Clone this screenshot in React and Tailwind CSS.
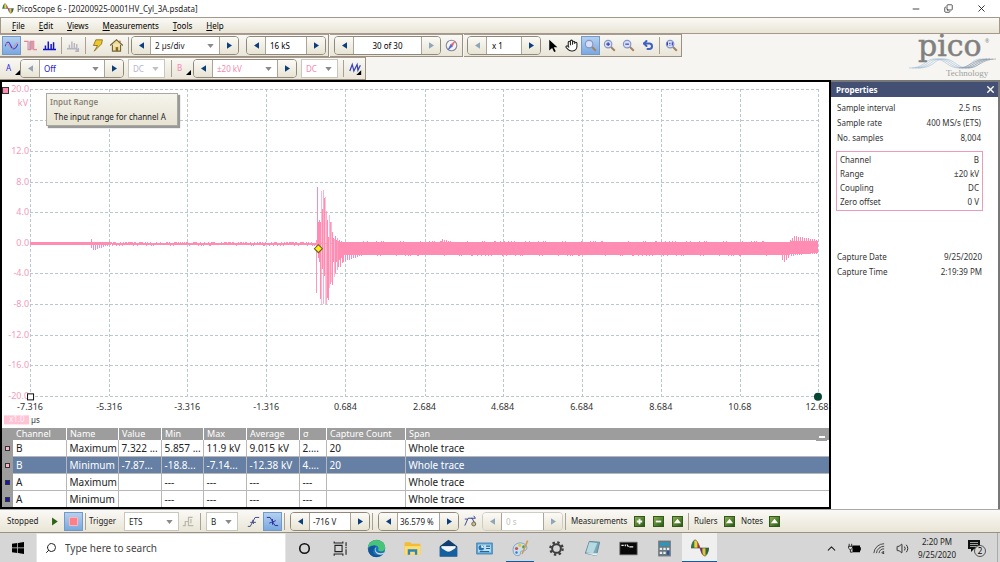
import React from 'react';
import { Minus, Copy, X, Search, Settings, ChevronUp, Volume2, Hand, Undo2 } from 'lucide-react';

const FONT = "font-['Noto_Sans','Open_Sans',sans-serif]";

const Tri = ({ dir = 'right', dim }) => (
  <svg viewBox="0 0 6 8" className={`h-[7px] w-[5px] ${dim ? 'fill-[#8fa6b8]' : 'fill-[#0b3f7c]'}`}>
    <path d={dir === 'left' ? 'M6 0V8L0 4Z' : 'M0 0V8L6 4Z'} />
  </svg>
);

const Sep = () => <span className="mx-[2px] h-[17px] w-px shrink-0 bg-[#a9a294]" />;

const Step = ({ dir, label, dim }) => (
  <button
    type="button"
    aria-label={`${label} ${dir === 'left' ? 'down' : 'up'}`}
    className="flex h-full w-[18px] shrink-0 items-center justify-center bg-linear-to-b from-[#fbfaf6] to-[#e8e4d4]"
  >
    <Tri dir={dir} dim={dim} />
  </button>
);

const Combo = ({ label, value, className, text = 'text-[#222]', dim }) => (
  <span className={`relative h-[17px] shrink-0 bg-white ${className}`}>
    <select aria-label={label} className={`block h-[17px] w-full appearance-none pr-3 pl-1 text-[8px] leading-[17px] ${text}`}>
      <option>{value}</option>
    </select>
    <svg viewBox="0 0 8 5" className={`pointer-events-none absolute top-[7px] right-[5px] h-[4px] w-[7px] ${dim ? 'fill-[#c0c0c0]' : 'fill-[#8a8a8a]'}`}>
      <path d="M0 0H8L4 5Z" />
    </svg>
  </span>
);

const Spin = ({ label, children, dimLeft, dimRight, faded }) => (
  <div className={`flex h-[19px] shrink-0 items-stretch overflow-hidden rounded-[4px] border ${faded ? 'border-[#cfccc2]' : 'border-[#8f897c]'}`}>
    <Step dir="left" label={label} dim={dimLeft} />
    <div className="flex border-x border-[#aaa598]">{children}</div>
    <Step dir="right" label={label} dim={dimRight} />
  </div>
);

const Field = ({ label, value, className }) => (
  <input aria-label={label} defaultValue={value} className={`h-[17px] min-w-0 bg-white text-[8px] leading-[17px] ${className}`} />
);

const Tool = ({ label, on, children }) => (
  <button
    type="button"
    aria-label={label}
    className={`flex h-[19px] w-[19px] shrink-0 items-center justify-center ${on ? 'border border-[#7399c6] bg-linear-to-b from-[#b5d0ef] to-[#79a8e0]' : ''}`}
  >
    <svg viewBox="0 0 16 16" className="h-[13px] w-[13px]" fill="none">
      {children}
    </svg>
  </button>
);

const Group = ({ children }) => (
  <div className="flex h-[23px] items-center border-r border-b border-[#9b9082] bg-linear-to-b from-[#faf9f5] to-[#e9e5d8] pl-[3px] shadow-[inset_0_1px_0_#a89d90]">
    {children}
  </div>
);

const Glass = ({ sign }) => (
  <>
    <path d="M9.5 9.5L14.5 14.5" stroke="#a58161" strokeWidth="2.4" />
    <circle cx="6.3" cy="6.3" r="4.6" fill="#d5e1fa" stroke="#8794c4" strokeWidth="1.4" />
    {sign && <path d={sign} stroke="#3439b6" strokeWidth="1.4" />}
  </>
);

const Channel = ({ name, color }) => (
  <button type="button" className="relative h-[19px] w-[17px] shrink-0 text-left text-[8px]">
    <span className={`pl-[3px] ${color}`}>{name}</span>
    <svg viewBox="0 0 5 5" className="absolute right-0 bottom-[3px] h-[5px] w-[5px]">
      <path d="M5 0V5H0Z" />
    </svg>
  </button>
);

const PicoIcon = ({ className }) => (
  <svg viewBox="0 0 20 20" className={className}>
    <path d="M0 10Q1 3 4 1V10Z" fill="#2f7f37" />
    <path d="M4 1Q6 0 7 3V10H4Z" fill="#ecd52d" />
    <path d="M7 3Q9 6 10 10H7Z" fill="#d2272c" />
    <path d="M10 10Q11 16 13 18V10Z" fill="#7d2f5d" />
    <path d="M13 10H16V18Q14.500 20 13 18Z" fill="#e4cb24" />
    <path d="M16 10H20Q19 17 16 18Z" fill="#2c6839" />
    <path d="M0 10Q4 -8 10 10Q16 28 20 10Z" fill="none" stroke="#4b4b4b" strokeWidth=".7" />
  </svg>
);

const Logo = () => (
  <svg viewBox="0 0 90 44" className="mr-px h-[44px] w-[90px] shrink-0 overflow-visible" role="img" aria-label="pico Technology">
    <g fill="none" strokeWidth=".6">
      {[0, 3, 6, 9].map((o) => (
        <path key={o} d={`M${o} 34C${17 + o} 34 ${15 + o} 25 ${26 + o} 25S${38 + o} 34 ${50 + o} 34S${62 + o} 25 ${72 + o} 25`} stroke="#9dbad6" />
      ))}
      {[0, 3, 6, 9].map((o) => (
        <path key={o} d={`M${50 + o} 34C${60 + o} 34 ${64 + o} 25 ${78 + o} 25`} stroke="#8b94a0" />
      ))}
    </g>
    <text x="9" y="22" fontSize="30" fill="#808080" stroke="#808080" strokeWidth=".5" fontFamily="DejaVu Serif, serif">pico</text>
    <text x="76" y="9" fontSize="5" fill="#858585" fontFamily="Noto Sans, sans-serif">®</text>
    <text x="37" y="42" fontSize="9" fill="#a0a0a0" fontFamily="Liberation Serif, serif">Technology</text>
  </svg>
);

const TitleBar = () => (
  <header className="flex h-[17px] items-center bg-white pl-[2px] text-[8px] text-[#222]">
    <PicoIcon className="mr-[3px] h-[11px] w-[12px]" />
    <h1>PicoScope 6 - [20200925-0001HV_Cyl_3A.psdata]</h1>
    <div className="ml-auto flex gap-[23px] pr-[13px]">
      <button type="button" aria-label="Minimize"><Minus size={10} strokeWidth={2} /></button>
      <button type="button" aria-label="Restore"><Copy size={9} strokeWidth={2} className="-scale-y-100" /></button>
      <button type="button" aria-label="Close"><X size={11} strokeWidth={2} /></button>
    </div>
  </header>
);

const MenuBar = () => (
  <nav className="flex h-[17px] items-center gap-[14px] border border-[#a3988b] bg-linear-to-b from-[#faf9f5] to-[#e9e5d6] pl-[11px] text-[8px]">
    {['File', 'Edit', 'Views', 'Measurements', 'Tools', 'Help'].map((m) => (
      <button type="button" key={m}>
        <span className="underline">{m[0]}</span>{m.slice(1)}
      </button>
    ))}
  </nav>
);

const Toolbars = () => (
  <div className="flex h-[46px] items-start justify-between bg-[#f6f5f1]">
    <div className="flex flex-col items-start">
      <div className="flex gap-px">
        <Group>
          <div className="-ml-px flex items-center">
            <Tool label="Scope mode" on>
              <path d="M0 9C3 1 5 3 7 8S12 15 16 6" stroke="#343ac4" strokeWidth="1.3" />
              <path d="M0 7C4 1 6 13 9 12S12 4 16 5" stroke="#df829b" strokeWidth="1.200" />
            </Tool>
            <Tool label="Persistence mode">
              <path d="M0 3H5V13H8V3H12V13H16" stroke="#ec8197" strokeWidth="1.4" />
              <path d="M8 3H12V13H8Z" fill="#d79aa9" />
              <path d="M7 3V13" stroke="#8f9bd6" />
            </Tool>
            <Tool label="Spectrum mode">
              <path d="M0 13H16M3 13V8M6.500 13V3M10 13V6M13 13V4" stroke="#1111ce" strokeWidth="1.800" />
            </Tool>
          </div>
          <Sep />
          <Tool label="Spectrum options">
            <path d="M0 12H11M3 12V7M6 12V3M9 12V5M12 12V6M10 11L14 15M14 11V15H10" stroke="#b5b4c0" strokeWidth="1.7" />
          </Tool>
          <Sep />
          <Tool label="Auto setup">
            <path d="M6 1H14L13 6L4 15L8 8H3Z" fill="#edc72f" stroke="#866818" />
          </Tool>
          <Tool label="Home">
            <path d="M0 8L8 1L16 8M3 7V15H13V7" fill="#f0df95" stroke="#75653b" strokeWidth="1.4" />
            <path d="M7 10H10V15H7Z" fill="#7f6b35" />
            <path d="M11 2H13V5" fill="#b34d36" />
          </Tool>
          <Sep />
          <Spin label="Timebase"><Combo label="Timebase" value="2 µs/div" className="w-[68px]" /></Spin>
          <span className="mr-px"><Sep /></span>
          <div className="ml-[2px]"><Spin label="Samples"><Field label="Samples" value="16 kS" className="w-[40px] pl-1" /></Spin></div>
          <span className="w-[2px]" />
        </Group>
        <Group>
          <div className="ml-px"><Spin label="Buffer" dimRight><Field label="Buffer" value="30 of 30" className="w-[67px] text-center" /></Spin></div>
          <span className="w-px" />
          <Tool label="Buffer navigator">
            <circle cx="8" cy="8" r="6.500" fill="#f5f5fc" stroke="#8b899a" strokeWidth="1.4" />
            <path d="M12 3L9 9L7 7Z" fill="#ed6166" stroke="#ed6166" />
            <path d="M4 13L9 9L7 7Z" fill="#4668df" stroke="#4668df" />
          </Tool>
          <span className="w-px" />
        </Group>
        <Group>
          <Spin label="Zoom" dimLeft><Field label="Zoom" value="x 1" className="w-[34px] pl-[5px]" /></Spin>
          <div className="ml-[2px] flex items-center">
            <Tool label="Pointer"><path d="M4 1V14L7.500 11L10 16L12 15L9.500 10H14Z" fill="#000" /></Tool>
            <button type="button" aria-label="Hand" className="flex h-[19px] w-[19px] items-center justify-center"><Hand size={13} className="fill-white text-[#222]" /></button>
            <Tool label="Marquee zoom" on><Glass /></Tool>
            <Tool label="Zoom in"><Glass sign="M4 6.300H8.600M6.300 4V8.600" /></Tool>
            <Tool label="Zoom out"><Glass sign="M4 6.300H8.600" /></Tool>
            <button type="button" aria-label="Undo zoom" className="flex h-[19px] w-[19px] items-center justify-center"><Undo2 size={12} strokeWidth={4} className="text-[#4161c2]" /></button>
            <Sep />
            <Tool label="Zoom to full"><Glass sign="M3 4V8M9 4V8M6 4.500V6M6 7V8" /></Tool>
          </div>
        </Group>
      </div>
      <Group>
        <Channel name="A" color="text-[#2a2ae0]" />
        <Spin label="Channel A range" dimLeft><Combo label="Channel A range" value="Off" className="w-[64px]" text="text-[#1717c8]" /></Spin>
        <div className="ml-[4px] h-[19px] border border-[#c9c6bc]"><Combo label="Channel A coupling" value="DC" className="block w-[35px]" text="text-[#b6b6cd]" dim /></div>
        <span className="ml-[4px] flex"><Sep /></span>
        <Channel name="B" color="text-[#f28aae]" />
        <div className="ml-[2px]"><Spin label="Channel B range"><Combo label="Channel B range" value="±20 kV" className="w-[64px]" text="text-[#f28aae]" /></Spin></div>
        <div className="ml-[4px] h-[19px] border border-[#c9c6bc]"><Combo label="Channel B coupling" value="DC" className="block w-[35px]" text="text-[#f28aae]" /></div>
        <span className="ml-[3px] flex"><Sep /></span>
        <Tool label="Digital channels">
          <path d="M1 11L4 3L6 11L10 3L11 10L14 4" stroke="#3540b9" strokeWidth="1.5" />
          <path d="M15 10V16H9Z" fill="#000" />
        </Tool>
      </Group>
    </div>
    <Logo />
  </div>
);

const GRID_X = [30, 109, 187, 266, 345, 424, 502, 581, 660, 739, 817];
const GRID_Y = [89, 120, 151, 182, 212, 243, 273, 304, 335, 365, 396];
const LABEL_X = ['-7.316', '-5.316', '-3.316', '-1.316', '0.684', '2.684', '4.684', '6.684', '8.684', '10.68', '12.68'];
const LABEL_Y = ['20.0', '', '12.0', '8.0', '4.0', '0.0', '-4.0', '-8.0', '-12.0', '-16.0', '-20.0'];

// ringing around the trigger: x, top, bottom, opacity
const RING = [
  [316, 240, 293, 0.9], [317, 187, 246, 1], [318, 222, 258, 1], [319, 220, 262, 1], [320, 222, 299, 1],
  [321, 191, 304, 0.6], [322, 209, 269, 1], [323, 190, 304, 0.7], [324, 198, 276, 1], [325, 197, 304, 0.5],
  [326, 211, 304, 0.7], [327, 220, 298, 1], [328, 237, 300, 1], [329, 215, 288, 0.6], [330, 222, 284, 0.9],
  [331, 222, 282, 0.6], [332, 232, 285, 1], [333, 238, 262, 1], [334, 239, 277, 0.6], [335, 236, 273, 1],
  [336, 240, 262, 1], [337, 238, 270, 0.8], [338, 241, 267, 1], [339, 240, 260, 1], [340, 242, 267, 1],
  [341, 241, 258, 1], [342, 242, 263, 1],
];

const column = (x) => {
  const n = (x * 37 + ((x * x) % 23)) % 7;
  if (x < 89) return [242, 245];
  if (x < 112) {
    const a = x < 93 ? (x - 88) * 1.2 : 6 - (x - 93) / 3;
    return x % 2 ? [x === 91 ? 239 : 242, 244 + a] : [242, 245];
  }
  if (x < 316) return [n > 3 ? 242 : 243, n === 2 ? 246 : 245];
  if (x < 362) return [242, 255 + (x % 2 ? (362 - x) / 3 : 0)];
  if (x < 780) {
    const bump = x > 439 && x < 452 && x % 2 ? (452 - x) / 4 : 0;
    return [(n ? 242 : 241) - bump, n === 3 ? 256 : 255];
  }
  if (x < 789) return x % 2 ? [242, 262 - Math.abs(x - 783)] : [242, 255];
  const env = x < 793 ? 793 - x : (x - 793) / 6;
  return x % 2 ? [Math.round(236 + env), 254] : [241, Math.round(256 - (x - 789) / 8)];
};

const COLUMNS = [];
for (let x = 30; x < 817; x++) {
  if (x < 316 || x > 342) COLUMNS.push(x);
}
const TRACE = COLUMNS.map((x) => {
  const [top, bottom] = column(x);
  return `M${x} ${top}H${x + 1}V${bottom}H${x}Z`;
}).join('');

const Chart = () => (
  <div className="relative min-h-0 flex-1 bg-white">
    <svg viewBox="2 82 826 346" className="block h-full w-full" fontFamily="Noto Sans, sans-serif" fontSize="9">
      <g stroke="#b8c8cc" strokeDasharray="3 2" shapeRendering="crispEdges">
        {GRID_X.map((x) => <path key={x} d={`M${x + 0.5} 89V396`} />)}
        {GRID_Y.map((y) => <path key={y} d={`M30 ${y + 0.5}H817`} />)}
      </g>
      <g fill="#f59abb" textAnchor="end">
        {GRID_Y.map((y, i) => <text key={y} x="29" y={y + 3}>{LABEL_Y[i]}</text>)}
        <text x="28" y="106">kV</text>
      </g>
      <g fill="#333" textAnchor="middle">
        {GRID_X.map((x, i) => <text key={x} x={i === 10 ? 816 : x} y="410">{LABEL_X[i]}</text>)}
      </g>
      <g fill="#ff8cb2" shapeRendering="crispEdges">
        <path d={TRACE} />
        {RING.map(([x, top, bottom, o]) => <rect key={x} x={x} y={top} width="1" height={bottom - top} opacity={o} />)}
      </g>
      <path d="M318 244.500L322 248.500L318 252.500L314 248.500Z" fill="#ffed15" stroke="#665d2d" />
      <rect x="2.500" y="87.500" width="6" height="6" fill="#ff8cb2" stroke="#333" />
      <rect x="27.500" y="393.500" width="6" height="6" fill="#fff" stroke="#111" />
      <circle cx="817" cy="396.500" r="4" fill="#064633" />
      <rect x="4" y="415" width="25" height="9" fill="#ffc3d6" />
      <text x="9" y="422" fontSize="8" fill="#fff0f5">x1.0</text>
      <text x="31" y="423" fontSize="8" fill="#333">µs</text>
    </svg>
    <div role="tooltip" className="absolute top-[11px] left-[44px] border border-[#aaa89f] bg-linear-to-b from-[#f6f5ed] to-[#e7e3d3] pr-[11px] pb-px pl-[3px] text-[8px] leading-[15px] whitespace-nowrap shadow-[2px_2px_1px_#999]">
      <p className="font-semibold text-[#8b8579]">Input Range</p>
      <p className="pl-[4px] text-[#222]">The input range for channel A</p>
    </div>
  </div>
);

const COLS = [
  ['Channel', 'w-[53px]'], ['Name', 'w-[52px]'], ['Value', 'w-[43px]'], ['Min', 'w-[42px]'], ['Max', 'w-[43px]'],
  ['Average', 'w-[53px]'], ['σ', 'w-[27px]'], ['Capture Count', 'w-[79px]'], ['Span', ''],
];
const ROWS = [
  ['B', 'Maximum', '7.322 ...', '5.857 ...', '11.9 kV', '9.015 kV', '2....', '20', 'Whole trace'],
  ['B', 'Minimum', '-7.87...', '-18.8...', '-7.14...', '-12.38 kV', '4....', '20', 'Whole trace'],
  ['A', 'Maximum', '', '---', '---', '---', '---', '', 'Whole trace'],
  ['A', 'Minimum', '', '---', '---', '---', '---', '', 'Whole trace'],
];

const Measurements = () => (
  <div className="relative">
    <table className="w-full table-fixed border-collapse whitespace-nowrap">
      <thead className="bg-[#9d9d9d] text-[9px] leading-[12px] text-white">
        <tr>
          <th className="w-[11px] p-0" aria-label="Colour" />
          {COLS.map(([name, w]) => (
            <th key={name} className={`h-[12px] p-0 text-left font-normal ${w}`}>
              <span className={`block pl-[3px] ${name === 'Channel' ? '' : 'border-l border-white'}`}>{name}</span>
            </th>
          ))}
        </tr>
      </thead>
      <tbody className="text-[10px] leading-[16px]">
        {ROWS.map((row, i) => (
          <tr key={i} className={i === 1 ? 'bg-[#6680a5] text-white' : 'bg-white text-[#222]'}>
            <td className="bg-[#9d9d9d] p-0">
              <span className={`ml-[3px] block h-[5px] w-[5px] border border-[#333] ${row[0] === 'B' ? 'bg-[#ffb0c8]' : 'bg-[#1515c5]'}`} />
            </td>
            {row.map((cell, j) => (
              <td key={j} className={`h-[16px] overflow-hidden border-[#b7b7b7] p-0 pl-[3px] ${j < 8 ? 'border-r' : ''} ${i < 3 ? 'border-b' : ''}`}>{cell}</td>
            ))}
          </tr>
        ))}
      </tbody>
    </table>
    <button type="button" aria-label="Collapse measurements" className="absolute top-[5px] right-[2px] flex h-[8px] w-[11px] items-center justify-center bg-[#9d9d9d]">
      <span className="h-[2px] w-[6px] bg-white" />
    </button>
  </div>
);

const Prop = ({ name, value }) => (
  <div className="flex justify-between">
    <dt>{name}</dt>
    <dd>{value}</dd>
  </div>
);

const Properties = () => (
  <aside className="w-[169px] shrink-0 border-t-2 border-r-2 border-[#777] bg-white text-[8px] leading-[15px] text-[#333]">
    <div className="flex h-[15px] items-center justify-between bg-[#434f73] pr-[2px] pl-[5px] text-white">
      <h2 className="font-bold">Properties</h2>
      <button type="button" aria-label="Close properties"><X size={11} strokeWidth={3} /></button>
    </div>
    <dl className="pt-[3px] pr-[17px] pl-[6px]">
      <Prop name="Sample interval" value="2.5 ns" />
      <Prop name="Sample rate" value="400 MS/s (ETS)" />
      <Prop name="No. samples" value="8,004" />
    </dl>
    <dl className="mt-[6px] mr-[15px] ml-[5px] border border-[#ea9cba] px-[3px] py-px leading-[14px]">
      <Prop name="Channel" value="B" />
      <Prop name="Range" value="±20 kV" />
      <Prop name="Coupling" value="DC" />
      <Prop name="Zero offset" value="0 V" />
    </dl>
    <dl className="mt-[38px] pr-[16px] pl-[6px]">
      <Prop name="Capture Date" value="9/25/2020" />
      <Prop name="Capture Time" value="2:19:39 PM" />
    </dl>
  </aside>
);

const Green = ({ label, d }) => (
  <button type="button" aria-label={label} className="h-[11px] w-[11px] shrink-0 border border-[#31591c] bg-linear-to-br from-[#8cae51] to-[#285b16]">
    <svg viewBox="0 0 10 10" className="h-full w-full fill-white"><path d={d} /></svg>
  </button>
);
const UP = 'M5 2L9 7H1Z';

const StatusBar = () => (
  <div className="flex h-[24px] items-center border-t border-b border-t-[#aaa] border-b-[#9b9082] bg-linear-to-b from-[#faf9f5] to-[#e9e5d6] pl-[7px] text-[8px] text-[#222]">
    <span className="w-[38px]">Stopped</span>
    <Tool label="Start"><path d="M5 3V13L12 8Z" fill="#2c6415" /></Tool>
    <Tool label="Stop" on><path d="M3 3H13V13H3Z" fill="#ff7f89" stroke="#ffc1c4" /></Tool>
    <Sep />
    <span className="mr-[5px] ml-px w-[30px]">Trigger</span>
    <div className="h-[19px] border border-[#c9c6bc]"><Combo label="Trigger mode" value="ETS" className="block w-[53px]" /></div>
    <Tool label="Advanced triggers"><path d="M1 13H4V8H8V3H13M8 6V13H14M11 5V10" stroke="#b9b7ad" strokeWidth="1.5" /></Tool>
    <Sep />
    <div className="ml-[3px] h-[19px] border border-[#c9c6bc]"><Combo label="Trigger source" value="B" className="block w-[30px]" /></div>
    <span className="w-[6px]" />
    <Tool label="Rising edge"><path d="M1 14H4L10 3H15M4 9H11M7 6L8 11" stroke="#414889" strokeWidth="1.200" /></Tool>
    <Tool label="Falling edge" on><path d="M1 3H5L11 13H15M4 10L12 7M8 5V12" stroke="#2930a0" strokeWidth="1.200" /></Tool>
    <Sep />
    <div className="ml-[3px]"><Spin label="Threshold"><Field label="Threshold" value="-716 V" className="w-[40px] pl-[3px]" /></Spin></div>
    <Sep />
    <div className="ml-[3px]"><Spin label="Pre-trigger"><Field label="Pre-trigger" value="36.579 %" className="w-[41px] pl-[2px]" /></Spin></div>
    <span className="w-[2px]" />
    <Tool label="Trigger delay">
      <path d="M1 13L5 4H10L14 12M1 5H4M9 4H14L12 1" stroke="#3a449a" strokeWidth="1.200" />
      <circle cx="12" cy="11" r="2.500" fill="#d0bd75" stroke="#5b5a5e" />
    </Tool>
    <div className="ml-[2px]"><Spin label="Delay" dimLeft dimRight faded><Field label="Delay" value="0 s" className="w-[41px] pl-[4px] text-[#c4c2bb]" /></Spin></div>
    <Sep />
    <span className="ml-[3px] w-[63px]">Measurements</span>
    <div className="flex gap-[8px]">
      <Green label="Add measurement" d="M4 2H6V4H8V6H6V8H4V6H2V4H4Z" />
      <Green label="Delete measurement" d="M2 4H8V6H2Z" />
      <Green label="Edit measurement" d={UP} />
    </div>
    <span className="ml-[3px] flex"><Sep /></span>
    <span className="ml-[3px] w-[30px]">Rulers</span>
    <Green label="Rulers" d={UP} />
    <span className="ml-[6px] w-[28px]">Notes</span>
    <Green label="Notes" d={UP} />
  </div>
);

const APPS = [
  ['Cortana', <circle cx="12" cy="12" r="6" fill="none" stroke="#111" strokeWidth="2" />],
  ['Task view', <path d="M5 8H14V16H5ZM4 3V5H15V3M4 21V19H15V21M19 4V9M19 13V20M18 11H20" fill="none" stroke="#222" strokeWidth="1.400" />],
  ['Edge', (
    <>
      <circle cx="12" cy="12" r="11" fill="#1475bd" />
      <path d="M1 11C3 -3 23 -1 23 11C23 16 16 17 14 14C17 7 7 6 1 11Z" fill="#47c476" />
      <path d="M9 12C4 21 15 22 21 18C12 28 0 20 2 12C4 9 8 8 11 9Z" fill="#155496" />
      <path d="M12 10C8 15 14 20 22 17L21 19C14 22 9 17 10 12Z" fill="#d6d6d6" />
    </>
  )],
  ['File Explorer', (
    <>
      <path d="M2 4H9L11 6H22V20H2Z" fill="#f2bd36" />
      <path d="M2 9H22V20H2Z" fill="#ffdc70" />
      <path d="M6 20V13H18V20H15V16H9V20Z" fill="#2d85bd" />
    </>
  )],
  ['Mail', (
    <>
      <path d="M1 9L12 1L23 9V22H1Z" fill="#103f70" />
      <path d="M3 9H21V16H3Z" fill="#f3f7fb" />
      <path d="M1 10L12 17L23 10V22H1Z" fill="#15609e" />
    </>
  )],
  ['Control Panel', (
    <>
      <path d="M2 5H22V19H2Z" fill="#5b9fd0" stroke="#4384b5" />
      <path d="M4 7H20V17H4Z" fill="#b9e1f6" />
      <circle cx="8" cy="11" r="3.500" fill="#2974ad" />
      <path d="M8 7V11H12" fill="#fff" />
      <path d="M14 9H19M14 12H19M6 16H18" stroke="#246793" strokeWidth="1.500" />
    </>
  )],
  ['Paint', (
    <>
      <path d="M3 17C0 6 12 2 18 7C23 12 18 16 14 15C10 15 14 21 9 21C6 21 4 20 3 17Z" fill="#c9dfed" stroke="#6b9cbd" />
      <circle cx="7" cy="12" r="2" fill="#d35046" /><circle cx="11" cy="8" r="2" fill="#eac735" />
      <circle cx="16" cy="10" r="2" fill="#4d9e51" /><circle cx="7" cy="17" r="1.500" fill="#4273bd" />
      <path d="M21 2L14 19" stroke="#d39a53" strokeWidth="2" />
    </>
  ), true],
  ['Settings', (
    <>
      <circle cx="12" cy="12" r="5.500" fill="none" stroke="#3d3d3d" strokeWidth="2.500" />
      <circle cx="12" cy="12" r="7.700" fill="none" stroke="#3d3d3d" strokeWidth="3" strokeDasharray="3 3.050" />
    </>
  )],
  ['Notepad', (
    <>
      <path d="M8 3L21 4L17 21L3 18Z" fill="#78a9b9" stroke="#527e8c" />
      <path d="M8 4L18 5L13 18L4 17Z" fill="#b7d9e1" />
      <path d="M3 18L17 21L19 18" fill="#e9eeee" />
    </>
  )],
  ['Command Prompt', (
    <>
      <path d="M1 4H23V20H1Z" fill="#080808" stroke="#777" />
      <path d="M3 8H6M8 7V9M10 7L12 10M13 10H18" stroke="#eee" strokeWidth="1.500" />
    </>
  )],
  ['Calculator', (
    <>
      <path d="M4 2H20V22H4Z" fill="#6c7780" />
      <path d="M6 4H18V9H6Z" fill="#3295b5" />
      <path d="M6 11H9V14H6ZM10.500 11H13.500V14H10.500ZM15 11H18V14H15ZM6 16H9V19H6ZM10.500 16H13.500V19H10.500Z" fill="#e9eef0" />
      <path d="M15 15H18V20H15Z" fill="#24529b" />
    </>
  )],
];

const Taskbar = () => (
  <footer className="flex h-[30px] items-stretch bg-[#d6d6d6] text-[#222]">
    <button type="button" aria-label="Start" className="flex w-[36px] items-center justify-center">
      <svg viewBox="0 0 12 12" className="h-[12px] w-[12px]"><path d="M0 1.700L5.300 1V5.600H0ZM6 .9L12 0V5.600H6ZM0 6.300H5.300V11L0 10.300ZM6 6.300H12V12L6 11.100Z" /></svg>
    </button>
    <label className="flex w-[250px] items-center gap-[8px] border border-[#e5e5e5] bg-white pl-[8px]">
      <Search size={12} strokeWidth={2} className="-scale-x-100" />
      <input type="search" aria-label="Search" placeholder="Type here to search" className="min-w-0 flex-1 text-[10px] placeholder:text-[#444]" />
    </label>
    {APPS.map(([name, icon, running]) => (
      <button type="button" key={name} aria-label={name} className="flex w-[36px] flex-col items-center">
        <svg viewBox="0 0 24 24" className="mt-[6px] h-[19px] w-[19px]">{icon}</svg>
        {running && <span className="mt-auto h-[2px] w-[28px] bg-[#0f5ba5]" />}
      </button>
    ))}
    <button type="button" aria-label="PicoScope" className="flex w-[35px] flex-col items-center bg-[#efefef]">
      <PicoIcon className="mt-[6px] h-[18px] w-[18px]" />
      <span className="mt-auto h-[2px] w-full bg-[#0f5ba5]" />
    </button>
    <div className="ml-auto flex items-center">
      <button type="button" aria-label="Hidden icons" className="flex w-[24px] justify-center"><ChevronUp size={13} strokeWidth={2} /></button>
      <svg viewBox="0 0 16 12" className="mx-[5px] h-[10px] w-[14px]" role="img" aria-label="Battery">
        <path d="M5 3H14V5H15V9H14V11H5Z" />
        <path d="M1 1V4M4 1V4M0 4H5V6L3 8H2L0 6ZM2.500 8V11H5" fill="none" stroke="#111" />
      </svg>
      <svg viewBox="0 0 14 14" className="mx-[6px] h-[12px] w-[12px]" role="img" aria-label="Network" fill="none" stroke="#333">
        <path d="M1 13A12 12 0 0 1 13 2M4 13A9 9 0 0 1 13 5M7 13A6 6 0 0 1 13 8M10 13A3 3 0 0 1 13 11" />
        <circle cx="12" cy="13" r=".7" fill="#333" />
      </svg>
      <Volume2 size={13} strokeWidth={1.7} className="mx-[5px]" />
      <time className="w-[46px] text-center text-[8px] leading-[13px]">2:20 PM<br />9/25/2020</time>
      <button type="button" aria-label="Notifications" className="mr-[10px] ml-[7px]">
        <svg viewBox="0 0 20 18" className="h-[18px] w-[20px]">
          <path d="M1 1H13V10H7L4 13V10H1Z" fill="#111" />
          <path d="M3 3.500H11M3 5.500H11M3 7.500H11" stroke="#ddd" strokeWidth=".7" />
          <circle cx="13" cy="12" r="5.500" fill="#d6d6d6" stroke="#555" />
          <text x="13" y="15" textAnchor="middle" fontSize="8" fontFamily="Noto Sans, sans-serif">2</text>
        </svg>
      </button>
      <span className="mr-[2px] h-[30px] w-px bg-[#aaa]" />
    </div>
  </footer>
);

const App = () => (
  <div className={`flex min-h-screen flex-col bg-white text-black ${FONT}`}>
    <TitleBar />
    <MenuBar />
    <Toolbars />
    <main className="flex flex-1">
      <section className="flex min-w-0 flex-1 flex-col border-2 border-black">
        <Chart />
        <Measurements />
      </section>
      <Properties />
    </main>
    <StatusBar />
    <Taskbar />
  </div>
);

export default App;
